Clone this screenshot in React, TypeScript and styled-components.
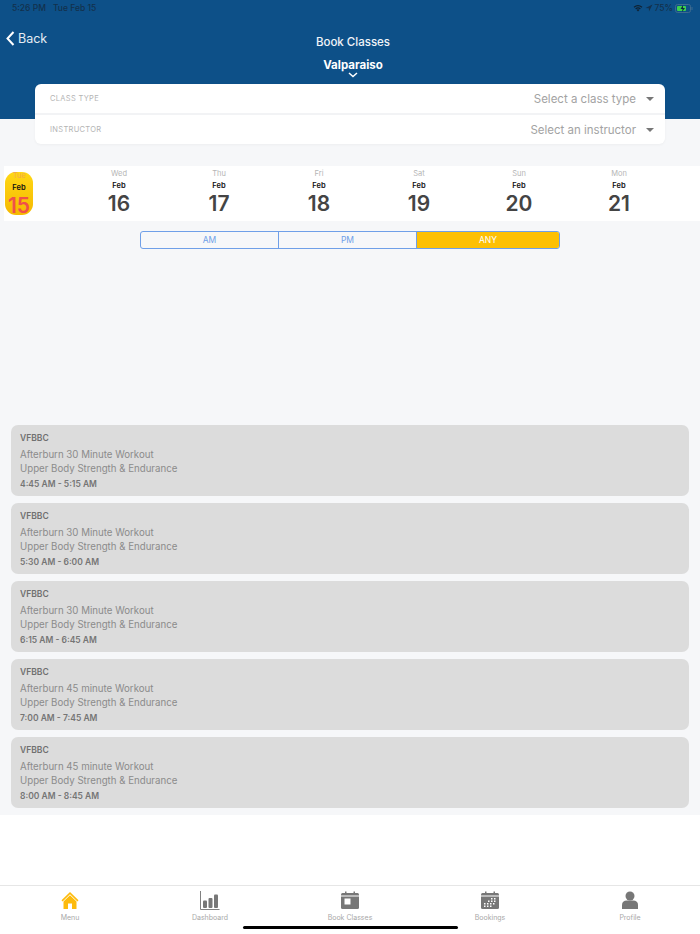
import React from "react";
import styled, { createGlobalStyle } from "styled-components";

const GlobalStyle = createGlobalStyle`
  html, body {
    margin: 0;
    padding: 0;
    background: #ffffff;
    font-family: Inter, "Liberation Sans", sans-serif;
  }
`;

const Screen = styled.div`
  width: 700px;
  height: 934px;
  overflow: hidden;
  display: flex;
  flex-direction: column;
  background: #ffffff;
`;

const Header = styled.header`
  height: 119px;
  flex-shrink: 0;
  background: #0d5088;
  display: flex;
  flex-direction: column;
  color: #ffffff;
`;

const StatusBar = styled.div`
  height: 16px;
  padding: 0 7px 0 12px;
  display: flex;
  align-items: center;
  justify-content: space-between;
  font-size: 8.5px;
  font-weight: 500;
  color: #13304c;
`;

const StatusGroup = styled.div`
  display: flex;
  align-items: center;
  gap: ${(p: { $gap: number }) => p.$gap}px;
`;

const NavRow = styled.div`
  display: grid;
  grid-template-columns: 1fr auto 1fr;
  padding: 15px 0 0 6px;
`;

const BackLink = styled.div`
  display: flex;
  align-items: center;
  gap: 3px;
  font-size: 12.5px;
  height: 14px;
  color: #e4ecf3;
`;

const TitleBlock = styled.div`
  display: flex;
  flex-direction: column;
  align-items: center;
  padding-top: 4px;
`;

const Title = styled.div`
  font-size: 11.5px;
  font-weight: 500;
  line-height: 14px;
  color: #f0f4f8;
`;

const Location = styled.div`
  margin-top: 9px;
  font-size: 11.5px;
  font-weight: 700;
  line-height: 14px;
`;

const Body = styled.main`
  height: 696px;
  flex-shrink: 0;
  background: #f6f7f9;
  display: flex;
  flex-direction: column;
`;

const FilterCard = styled.section`
  margin: -35px 35px 0;
  height: 60px;
  box-sizing: border-box;
  background: #ffffff;
  border-radius: 6px;
  display: flex;
  flex-direction: column;
  box-shadow: 0 1px 3px rgba(0, 0, 0, 0.04);
`;

const FilterRow = styled.div<{ $divider?: boolean }>`
  flex: 1;
  display: flex;
  align-items: center;
  justify-content: space-between;
  padding: 0 11px 0 15px;
  border-bottom: ${(p) => (p.$divider ? "2px solid #f2f3f5" : "none")};
`;

const FilterLabel = styled.span`
  font-size: 7.5px;
  letter-spacing: 0.3px;
  color: #b4b4b4;
`;

const FilterValue = styled.span`
  display: flex;
  align-items: center;
  gap: 10px;
  font-size: 11.5px;
  color: #a3a3a3;
`;

const Caret = styled.span`
  width: 0;
  height: 0;
  border-left: 4px solid transparent;
  border-right: 4px solid transparent;
  border-top: 4px solid #777777;
`;

const DateStrip = styled.div`
  margin: 22px 0 0 4px;
  height: 55px;
  background: #ffffff;
  display: grid;
  grid-template-columns: 65px repeat(6, 100px);
`;

const DayCell = styled.div`
  display: flex;
  flex-direction: column;
  align-items: center;
`;

const TodayPill = styled.div`
  margin: 6px 0 0 1px;
  width: 28px;
  height: 43px;
  border-radius: 11px;
  background: linear-gradient(#ffd815, #f5b800);
  display: flex;
  flex-direction: column;
  align-items: center;
  align-self: flex-start;
`;

const Weekday = styled.div<{ $today?: boolean }>`
  margin-top: ${(p) => (p.$today ? "-1px" : "3px")};
  font-size: 7.5px;
  line-height: 10px;
  color: ${(p) => (p.$today ? "#f3a94a" : "#b5b5b5")};
`;

const Month = styled.div`
  margin-top: 2px;
  font-size: 7.5px;
  font-weight: 600;
  line-height: 10px;
  color: #111111;
`;

const DayNumber = styled.div<{ $today?: boolean }>`
  margin-top: 1px;
  font-size: 21px;
  font-weight: 600;
  line-height: 24px;
  color: ${(p) => (p.$today ? "#f0504a" : "#444444")};
`;

const Segments = styled.div`
  margin: 10px auto 0;
  width: 420px;
  height: 18px;
  box-sizing: border-box;
  display: grid;
  grid-template-columns: 138px 138px 1fr;
  border: 1px solid #6f9fe8;
  border-radius: 3px;
  overflow: hidden;
`;

const Segment = styled.div<{ $active?: boolean; $divider?: boolean }>`
  display: flex;
  align-items: center;
  justify-content: center;
  font-size: 8.5px;
  color: ${(p) => (p.$active ? "#ffffff" : "#6f9fe8")};
  background: ${(p) => (p.$active ? "#fdc004" : "transparent")};
  border-right: ${(p) => (p.$divider ? "1px solid #6f9fe8" : "none")};
`;

const ClassList = styled.div`
  margin-top: 176px;
  display: flex;
  flex-direction: column;
  gap: 7px;
  padding: 0 11px;
`;

const ClassCard = styled.article`
  height: 71px;
  box-sizing: border-box;
  padding: 8px 9px 0;
  background: #dcdcdc;
  border-radius: 7px;
`;

const Gym = styled.div`
  font-size: 8.5px;
  font-weight: 600;
  line-height: 11px;
  color: #707070;
`;

const ClassName = styled.div`
  font-size: 9.7px;
  line-height: 14px;
  color: #8b8b8b;
`;

const ClassNames = styled.div`
  margin-top: 4px;
`;

const ClassTime = styled.div`
  margin-top: 2px;
  font-size: 8.5px;
  font-weight: 600;
  line-height: 12px;
  color: #757575;
`;

const Spacer = styled.div`
  flex: 1;
  background: #f6f7f9;
`;

const TabBar = styled.nav`
  position: relative;
  height: 49px;
  flex-shrink: 0;
  box-sizing: border-box;
  border-top: 1px solid #e6e6e6;
  background: #ffffff;
  display: grid;
  grid-template-columns: repeat(5, 140px);
`;

const Tab = styled.div`
  display: flex;
  flex-direction: column;
  align-items: center;
  padding-top: 5px;
`;

const TabIcon = styled.svg`
  width: 20px;
  height: 20px;
  display: block;
`;

const TabLabel = styled.span`
  margin-top: 2px;
  font-size: 7px;
  line-height: 9px;
  color: #a8a8a8;
`;

const HomeIndicator = styled.div`
  position: absolute;
  left: 243px;
  bottom: 5px;
  width: 215px;
  height: 3px;
  border-radius: 2px;
  background: #000000;
`;

const days = [
  { weekday: "Wed", date: 16 },
  { weekday: "Thu", date: 17 },
  { weekday: "Fri", date: 18 },
  { weekday: "Sat", date: 19 },
  { weekday: "Sun", date: 20 },
  { weekday: "Mon", date: 21 },
];

const classes = [
  { name: "Afterburn 30 Minute Workout", time: "4:45 AM - 5:15 AM" },
  { name: "Afterburn 30 Minute Workout", time: "5:30 AM - 6:00 AM" },
  { name: "Afterburn 30 Minute Workout", time: "6:15 AM - 6:45 AM" },
  { name: "Afterburn 45 minute Workout", time: "7:00 AM - 7:45 AM" },
  { name: "Afterburn 45 minute Workout", time: "8:00 AM - 8:45 AM" },
];

const HomeIcon = () => (
  <TabIcon viewBox="0 0 20 20">
    <path d="M10 1 L1.5 9.3 L2.6 10.4 L10 3.2 L17.4 10.4 L18.500 9.300 Z" fill="#fdbb0c" />
    <path d="M10 4.300 L3.500 10.500 V18 H8 V12.500 H12 V18 H16.500 V10.500 Z" fill="#fdbb0c" />
  </TabIcon>
);

const DashboardIcon = () => (
  <TabIcon viewBox="0 0 20 20">
    <path d="M0.500 0 V18.500 H19.500" fill="none" stroke="#808080" strokeWidth="1" />
    <rect x="3" y="9.500" width="4" height="7.500" rx="1" fill="#777777" />
    <rect x="8.500" y="7" width="4" height="10" rx="1" fill="#777777" />
    <rect x="14" y="3.500" width="4" height="13.500" rx="1" fill="#777777" />
  </TabIcon>
);

const BookIcon = () => (
  <TabIcon viewBox="0 0 20 20">
    <path
      d="M2.500 2 H17.500 Q19 2 19 3.500 V16.500 Q19 18 17.500 18 H2.500 Q1 18 1 16.500 V3.500 Q1 2 2.500 2 Z"
      fill="#777777"
    />
    <rect x="1" y="4.500" width="18" height="1" fill="#ffffff" />
    <rect x="4.500" y="7.500" width="6" height="6" fill="#ffffff" />
    <rect x="5" y="0.500" width="1.500" height="2.500" fill="#777777" />
    <rect x="13.500" y="0.500" width="1.500" height="2.500" fill="#777777" />
  </TabIcon>
);

const BookingsIcon = () => (
  <TabIcon viewBox="0 0 20 20">
    <path
      d="M2.500 2 H17.500 Q19 2 19 3.500 V16.500 Q19 18 17.500 18 H2.500 Q1 18 1 16.500 V3.500 Q1 2 2.500 2 Z"
      fill="#777777"
    />
    <rect x="1" y="4.500" width="18" height="1" fill="#ffffff" />
    <rect x="5" y="0.500" width="1.500" height="2.500" fill="#777777" />
    <rect x="13.500" y="0.500" width="1.500" height="2.500" fill="#777777" />
    {[
      [11, 7],
      [14, 7],
      [8, 9.500],
      [11, 9.500],
      [14, 9.500],
      [4, 12],
      [7, 12],
      [10, 12],
      [13, 12],
      [4, 14.500],
      [7, 14.500],
      [10, 14.500],
    ].map(([x, y]) => (
      <rect key={`${x}-${y}`} x={x} y={y} width="1.500" height="1.500" fill="#ffffff" />
    ))}
  </TabIcon>
);

const ProfileIcon = () => (
  <TabIcon viewBox="0 0 20 20">
    <circle cx="10" cy="5" r="4.500" fill="#777777" />
    <path d="M2 18 V14 Q2 9.500 7 9.500 H13 Q18 9.500 18 14 V18 Z" fill="#777777" />
  </TabIcon>
);

const tabs = [
  { label: "Menu", icon: <HomeIcon /> },
  { label: "Dashboard", icon: <DashboardIcon /> },
  { label: "Book Classes", icon: <BookIcon /> },
  { label: "Bookings", icon: <BookingsIcon /> },
  { label: "Profile", icon: <ProfileIcon /> },
];

const App = () => {
  return (
    <Screen>
      <GlobalStyle />
      <Header>
        <StatusBar>
          <StatusGroup $gap={7}>
            <span>5:26 PM</span>
            <span>Tue Feb 15</span>
          </StatusGroup>
          <StatusGroup $gap={2}>
            <svg width="10" height="8" viewBox="0 0 10 8">
              <path d="M5 7.500 L3.500 5.800 Q5 4.700 6.500 5.800 Z" fill="#10202e" />
              <path d="M2.600 4.800 Q5 2.900 7.400 4.800" fill="none" stroke="#10202e" strokeWidth="1.100" />
              <path d="M1 3.200 Q5 0 9 3.200" fill="none" stroke="#10202e" strokeWidth="1.100" />
            </svg>
            <svg width="8" height="8" viewBox="0 0 8 8">
              <path d="M7.500 0.500 L0.500 4 L3.800 4.200 L4 7.500 Z" fill="#13304c" />
            </svg>
            <span>75%</span>
            <svg width="18" height="9" viewBox="0 0 18 9">
              <rect x="0.500" y="0.500" width="15" height="8" rx="2" fill="none" stroke="#3d6a8f" />
              <rect x="2" y="2" width="9" height="5" rx="1" fill="#3dd14e" />
              <path d="M8 1 L5.500 5 H7.500 L7 8 L10 4 H8 Z" fill="#0d2a3f" />
              <rect x="16.500" y="3" width="1" height="3" fill="#3d6a8f" />
            </svg>
          </StatusGroup>
        </StatusBar>
        <NavRow>
          <BackLink>
            <svg width="9" height="15" viewBox="0 0 9 15">
              <path d="M7.500 1 L1.500 7.500 L7.500 14" fill="none" stroke="#ffffff" strokeWidth="2" />
            </svg>
            Back
          </BackLink>
          <TitleBlock>
            <Title>Book Classes</Title>
            <Location>Valparaiso</Location>
            <svg width="10" height="6" viewBox="0 0 10 6">
              <path d="M1 1 L5 4.500 L9 1" fill="none" stroke="#ffffff" strokeWidth="1.500" />
            </svg>
          </TitleBlock>
        </NavRow>
      </Header>
      <Body>
        <FilterCard>
          <FilterRow $divider>
            <FilterLabel>CLASS TYPE</FilterLabel>
            <FilterValue>
              Select a class type
              <Caret />
            </FilterValue>
          </FilterRow>
          <FilterRow>
            <FilterLabel>INSTRUCTOR</FilterLabel>
            <FilterValue>
              Select an instructor
              <Caret />
            </FilterValue>
          </FilterRow>
        </FilterCard>
        <DateStrip>
          <DayCell>
            <TodayPill>
              <Weekday $today>Tue</Weekday>
              <Month>Feb</Month>
              <DayNumber $today>15</DayNumber>
            </TodayPill>
          </DayCell>
          {days.map((day) => (
            <DayCell key={day.date}>
              <Weekday>{day.weekday}</Weekday>
              <Month>Feb</Month>
              <DayNumber>{day.date}</DayNumber>
            </DayCell>
          ))}
        </DateStrip>
        <Segments>
          <Segment $divider>AM</Segment>
          <Segment $divider>PM</Segment>
          <Segment $active>ANY</Segment>
        </Segments>
        <ClassList>
          {classes.map((item) => (
            <ClassCard key={item.time}>
              <Gym>VFBBC</Gym>
              <ClassNames>
                <ClassName>{item.name}</ClassName>
                <ClassName>Upper Body Strength &amp; Endurance</ClassName>
              </ClassNames>
              <ClassTime>{item.time}</ClassTime>
            </ClassCard>
          ))}
        </ClassList>
        <Spacer />
      </Body>
      <WhiteGap />
      <TabBar>
        {tabs.map((tab) => (
          <Tab key={tab.label}>
            {tab.icon}
            <TabLabel>{tab.label}</TabLabel>
          </Tab>
        ))}
        <HomeIndicator />
      </TabBar>
    </Screen>
  );
};

const WhiteGap = styled.div`
  flex: 1;
  background: #ffffff;
`;

export default App;
